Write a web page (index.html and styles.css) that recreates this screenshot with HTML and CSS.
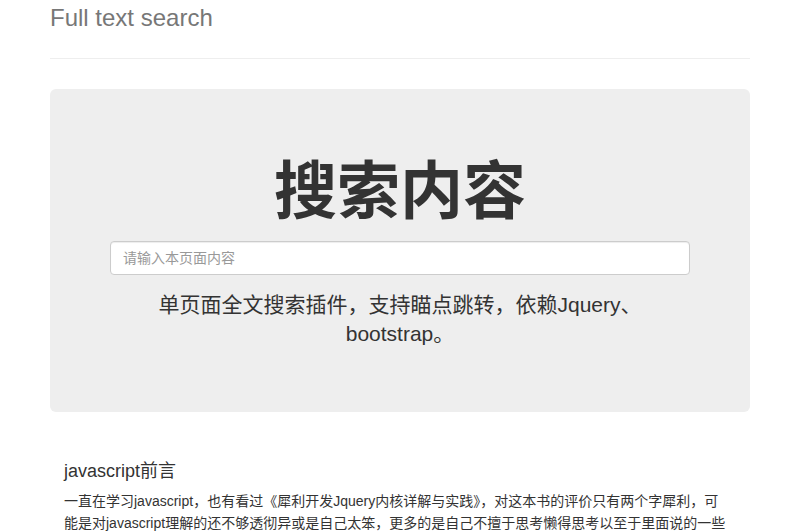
FILE: index.html
```html
<!DOCTYPE html>
<html lang="zh-CN">
<head>
    <meta charset="UTF-8">
    <meta name="viewport" content="width=device-width, initial-scale=1.0">
    <title>Full text search</title>
    <link rel="stylesheet" href="styles.css">
</head>
<body>
    <div class="container">
        <div class="page-header">
            <h1>Full text search</h1>
        </div>

        <div class="jumbotron">
            <h2 class="jumbo-title">搜索内容</h2>
            <input class="search-input" type="text" placeholder="请输入本页面内容">
            <p class="lead">单页面全文搜索插件，支持瞄点跳转，依赖Jquery、bootstrap。</p>
        </div>

        <div class="article">
            <h3 class="article-title">javascript前言</h3>
            <p class="article-text">一直在学习javascript，也有看过《犀利开发Jquery内核详解与实践》，对这本书的评价只有两个字犀利，可能是对javascript理解的还不够透彻异或是自己太笨，更多的是自己不擅于思考懒得思考以至于里面说的一些精髓都没有太深入的理解。</p>
        </div>
    </div>
</body>
</html>
```

FILE: styles.css
```css
* {
    margin: 0;
    padding: 0;
    box-sizing: border-box;
}

body {
    font-family: "Liberation Sans", "Noto Sans CJK SC", sans-serif;
    font-size: 14px;
    color: #333;
    background: #fff;
}

.container {
    width: 700px;
    margin: 0 50px;
}

.page-header {
    padding: 5px 0 27px;
    border-bottom: 1px solid #eee;
    margin-bottom: 30px;
}

.page-header h1 {
    font-size: 24px;
    font-weight: normal;
    line-height: 1.1;
    color: #777;
}

.jumbotron {
    background: #eee;
    border-radius: 6px;
    padding: 48px 60px 49px;
    text-align: center;
}

.jumbo-title {
    margin-top: 20px;
    font-size: 63px;
    font-weight: bold;
    line-height: 69px;
    color: #333;
}

.search-input {
    display: block;
    width: 100%;
    height: 34px;
    margin-top: 15px;
    padding: 6px 12px;
    font-family: inherit;
    font-size: 14px;
    color: #555;
    background: #fff;
    border: 1px solid #ccc;
    border-radius: 4px;
    box-shadow: inset 0 1px 1px rgba(0,0,0,0.075);
    outline: none;
}

.search-input::placeholder {
    color: #999;
}

.lead {
    margin: 15px 0;
    font-size: 21px;
    line-height: 29px;
    color: #333;
}

.article {
    padding: 0 20px 0 14px;
    margin-top: 47px;
}

.article-title {
    font-size: 18px;
    font-weight: normal;
    line-height: 24px;
    margin-bottom: 7px;
}

.article-text {
    font-size: 14px;
    line-height: 22px;
}
```
